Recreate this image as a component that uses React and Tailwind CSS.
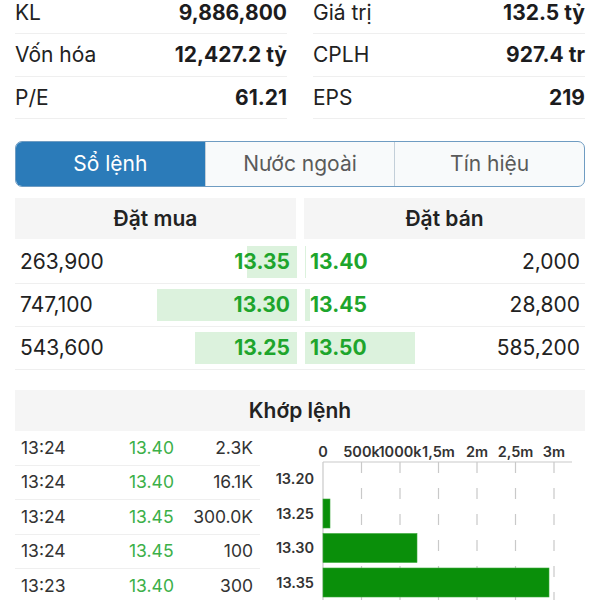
import React from "react";

const stats = [
  ["KL", "9,886,800", "Giá trị", "132.5 tỷ"],
  ["Vốn hóa", "12,427.2 tỷ", "CPLH", "927.4 tr"],
  ["P/E", "61.21", "EPS", "219"],
];

const book = [
  { buyVol: 263900, buy: "13.35", sell: "13.40", sellVol: 2000 },
  { buyVol: 747100, buy: "13.30", sell: "13.45", sellVol: 28800 },
  { buyVol: 543600, buy: "13.25", sell: "13.50", sellVol: 585200 },
];

const trades = [
  ["13:24", "13.40", "2.3K"],
  ["13:24", "13.40", "16.1K"],
  ["13:24", "13.45", "300.0K"],
  ["13:24", "13.45", "100"],
  ["13:23", "13.40", "300"],
];

const fmt = (n) => n.toLocaleString("en-US");
const barWidth = (v) => `${(v * 0.000188).toFixed(1)}px`;

function StatCol({ rows, side }) {
  return (
    <div className="flex flex-col">
      {rows.map((r) => (
        <div
          key={r[side]}
          className="flex h-[41.5px] items-center justify-between border-b border-[#efefef] box-content"
        >
          <span className="text-[21px] text-[#222]">{r[side]}</span>
          <span className="text-[21px] font-bold text-[#1c1c1e]">{r[side + 1]}</span>
        </div>
      ))}
    </div>
  );
}

function Tabs() {
  const tabs = ["Sổ lệnh", "Nước ngoài", "Tín hiệu"];
  return (
    <div className="mt-[22px] flex h-[46px] overflow-hidden rounded-[7px] border-[1.5px] border-[#6f9cc2] bg-[#f8fafb]">
      {tabs.map((t, i) => (
        <div
          key={t}
          className={
            i === 0
              ? "flex flex-1 items-center justify-center bg-[#2b7bb9] text-[21px] text-white"
              : "flex flex-1 items-center justify-center border-l border-[#c3cfd9] text-[21px] text-[#5a5a5a]"
          }
        >
          {t}
        </div>
      ))}
    </div>
  );
}

function OrderBook() {
  return (
    <div className="mt-[11px]">
      <div className="flex gap-2">
        <div className="flex h-[41px] flex-1 items-center justify-center bg-[#f5f5f5] text-[21px] font-semibold text-[#222]">
          Đặt mua
        </div>
        <div className="flex h-[41px] flex-1 items-center justify-center bg-[#f5f5f5] text-[21px] font-semibold text-[#222]">
          Đặt bán
        </div>
      </div>
      <div className="mt-[2px]">
        {book.map((r) => (
          <div key={r.buy} className="flex h-[32px] gap-2 border-b border-[#efefef] py-[5px] box-content">
            <div className="relative flex flex-1 items-center justify-between pl-[5px] pr-[7px]">
              <div className="absolute inset-y-0 right-0 bg-[#dcf2dd]" style={{ width: barWidth(r.buyVol) }} />
              <span className="relative text-[21px] text-[#222]">{fmt(r.buyVol)}</span>
              <span className="relative text-[21px] font-bold text-[#1ea52c]">{r.buy}</span>
            </div>
            <div className="relative flex flex-1 items-center justify-between pl-[5px] pr-[5px]">
              <div className="absolute inset-y-0 left-0 bg-[#dcf2dd]" style={{ width: barWidth(r.sellVol) }} />
              <span className="relative text-[21px] font-bold text-[#1ea52c]">{r.sell}</span>
              <span className="relative text-[21px] text-[#222]">{fmt(r.sellVol)}</span>
            </div>
          </div>
        ))}
      </div>
    </div>
  );
}

function Chart() {
  const ticks = ["0", "500k", "1000k", "1,5m", "2m", "2,5m", "3m"];
  const x0 = 63;
  const step = 38.5;
  const rows = [
    { label: "13.20", w: 0 },
    { label: "13.25", w: 7 },
    { label: "13.30", w: 94 },
    { label: "13.35", w: 226 },
  ];
  return (
    <svg width="325" height="172" className="block">
      {ticks.map((t, i) => (
        <text
          key={t}
          x={x0 + i * step}
          y="26"
          textAnchor="middle"
          fontSize="14.5"
          fontWeight="600"
          fill="#333"
          fontFamily="Inter, sans-serif"
        >
          {t}
        </text>
      ))}
      {ticks.slice(1).map((t, i) => (
        <line
          key={t}
          x1={x0 + (i + 1) * step}
          x2={x0 + (i + 1) * step}
          y1="31"
          y2="172"
          stroke="#c9c9c9"
          strokeWidth="1.2"
          strokeDasharray="11 15"
        />
      ))}
      <line x1={x0} x2="312" y1="31" y2="31" stroke="#c9c9c9" strokeWidth="1.2" />
      <line x1={x0} x2={x0} y1="31" y2="172" stroke="#c9c9c9" strokeWidth="1.2" />
      {rows.map((r, i) => {
        const top = 31 + i * 34.5;
        return (
          <g key={r.label}>
            <text
              x="54"
              y={top + 17.25 + 5}
              textAnchor="end"
              fontSize="14.5"
              fontWeight="600"
              fill="#333"
              fontFamily="Inter, sans-serif"
            >
              {r.label}
            </text>
            {r.w > 0 && (
              <rect x={x0} y={top + 2.5} width={r.w} height="29" fill="#0a8f0a" stroke="#3aa83a" strokeWidth="0.6" />
            )}
          </g>
        );
      })}
    </svg>
  );
}

function Matched() {
  return (
    <div className="mt-[20px]">
      <div className="flex h-[41px] items-center justify-center bg-[#f5f5f5] text-[21px] font-semibold text-[#222]">
        Khớp lệnh
      </div>
      <div className="flex">
        <div className="w-[245px]">
          {trades.map((t, i) => (
            <div
              key={i}
              className="flex h-[33.5px] items-center border-b border-[#efefef] pl-[6px] pr-[7px] text-[17.5px] box-content"
            >
              <span className="w-[108px] text-[#333]">{t[0]}</span>
              <span className="w-[50px] text-[#3cb049]">{t[1]}</span>
              <span className="flex-1 text-right text-[#333]">{t[2]}</span>
            </div>
          ))}
        </div>
        <div className="w-[325px]">
          <Chart />
        </div>
      </div>
    </div>
  );
}

export default function App() {
  return (
    <div className="h-[600px] w-[600px] overflow-hidden bg-white" style={{ fontFamily: "Inter, 'Noto Sans', sans-serif" }}>
      <div className="-mt-[8.5px] px-[15px]">
        <div className="grid grid-cols-2 gap-x-[26px]">
          <StatCol rows={stats} side={0} />
          <StatCol rows={stats} side={2} />
        </div>
        <Tabs />
        <OrderBook />
        <Matched />
      </div>
    </div>
  );
}
